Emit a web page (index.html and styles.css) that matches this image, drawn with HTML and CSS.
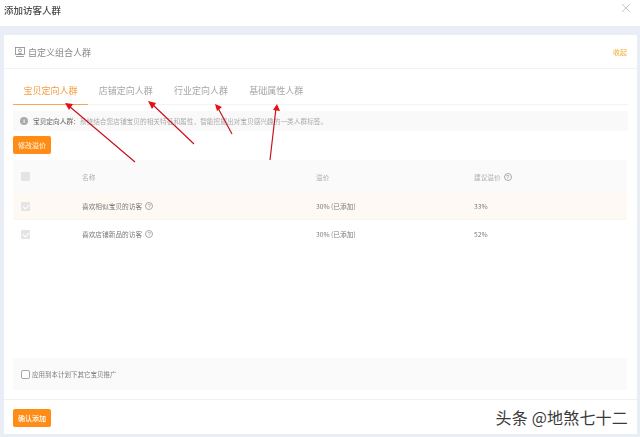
FILE: index.html
```html
<!DOCTYPE html>
<html lang="zh">
<head>
<meta charset="utf-8">
<title>添加访客人群</title>
<link rel="stylesheet" href="styles.css">
</head>
<body>
<div class="dialog">
  <header class="dialog-head">
    <h1>添加访客人群</h1>
    <svg class="close" width="10" height="10" viewBox="0 0 10 10"><path d="M1 1l8 8M9 1l-8 8"/></svg>
  </header>
  <main class="dialog-body">
    <section class="card">
      <div class="card-head">
        <div class="card-title">
          <svg class="title-icon" width="10" height="10" viewBox="0 0 10 10"><rect x=".5" y=".5" width="9" height="7"/><circle cx="5" cy="3.4" r="1.5"/><path d="M2.5 7.5c.3-1.5 4.700-1.500 5 0M1 9.500h8"/></svg>
          <span>自定义组合人群</span>
        </div>
        <a class="collapse">收起</a>
      </div>
      <div class="tabs">
        <span class="tab active">宝贝定向人群</span>
        <span class="tab">店铺定向人群</span>
        <span class="tab">行业定向人群</span>
        <span class="tab">基础属性人群</span>
      </div>
      <div class="notice">
        <span class="info">i</span>
        <b>宝贝定向人群：</b><span>系统结合您店铺宝贝的相关特征和属性，智能挖掘出对宝贝感兴趣的一类人群标签。</span>
      </div>
      <div class="actions"><button class="btn">修改溢价</button></div>
      <div class="table">
        <div class="row thead">
          <span class="c1"><i class="check"></i></span>
          <span class="c2">名称</span>
          <span class="c3">溢价</span>
          <span class="c4">建议溢价<i class="help">?</i></span>
        </div>
        <div class="row tint">
          <span class="c1"><i class="check on"></i></span>
          <span class="c2 dark">喜欢相似宝贝的访客<i class="help">?</i></span>
          <span class="c3 dark">30% (已添加)</span>
          <span class="c4 dark">33%</span>
        </div>
        <div class="row">
          <span class="c1"><i class="check on"></i></span>
          <span class="c2 dark">喜欢店铺新品的访客<i class="help">?</i></span>
          <span class="c3 dark">30% (已添加)</span>
          <span class="c4 dark">52%</span>
        </div>
      </div>
      <label class="apply"><i class="box"></i>应用到本计划下其它宝贝推广</label>
      <div class="card-foot"><button class="btn strong">确认添加</button></div>
    </section>
  </main>
</div>
<svg class="arrows" width="640" height="437" viewBox="0 0 640 437">
  <path class="shaft" d="M135 162L69 106M194 144L152 104M232 134L218 108M270 160L276 108"/>
  <path class="head" d="M65 103l8 1-4 6zM148 101l8 2-4 6zM215 104l7 3-5 4zM277 104l3 7-7-1z"/>
</svg>
<div class="watermark">头条 @地煞七十二</div>
</body>
</html>
```
FILE: styles.css
```css
* { box-sizing: border-box; }
html, body { margin: 0; padding: 0; }
body {
  position: relative;
  width: 640px;
  height: 437px;
  overflow: hidden;
  background: #fff;
  font-family: "Noto Sans CJK SC", "Liberation Sans", sans-serif;
  color: #666;
}
.dialog { display: flex; flex-direction: column; height: 437px; filter: blur(.3px); }
.dialog-head {
  display: flex;
  align-items: center;
  justify-content: space-between;
  height: 26px;
  padding: 0 9px 7px 4px;
  flex: none;
}
.dialog-head h1 { margin: 0; font-size: 9.500px; font-weight: 500; color: #4a4a4a; }
.close { stroke: #c4c4c4; stroke-width: 1; fill: none; margin-bottom: 3px; }
.dialog-body {
  flex: 1;
  padding: 9px 3px 3px 4px;
  background: #e9edf6;
  display: flex;
  min-height: 0;
}
.card {
  flex: 1;
  display: flex;
  flex-direction: column;
  background: #fff;
  min-width: 0;
}
.card-head {
  display: flex;
  align-items: center;
  justify-content: space-between;
  height: 34px;
  padding: 1px 10px 0 11px;
  border-bottom: 1px solid #f1f2f5;
  flex: none;
}
.card-title { display: flex; align-items: center; gap: 3px; font-size: 9px; color: #888; }
.title-icon { stroke: #888; stroke-width: .8; fill: none; }
.collapse { font-size: 7px; color: #f5a623; }
.tabs {
  display: flex;
  height: 36px;
  margin: 0 9px;
  border-bottom: 1px solid #f3f3f3;
  flex: none;
}
.tab {
  width: 75.200px;
  display: flex;
  align-items: center;
  justify-content: center;
  font-size: 9px;
  color: #a6a6a6;
  padding-top: 7px;
}
.tab.active { color: #f79a3e; border-bottom: 1px solid #f9a65a; margin-bottom: -1px; }
.notice {
  display: flex;
  align-items: center;
  height: 20px;
  margin: 6px 9px 0;
  padding-left: 7px;
  background: #f9f9f9;
  font-size: 6.700px;
  color: #acacac;
  white-space: nowrap;
  flex: none;
}
.notice b { font-weight: 500; color: #777; }
.info {
  width: 8px;
  height: 8px;
  border-radius: 50%;
  margin-right: 5px;
  background: #aaa;
  color: #fff;
  font: bold 6px/8px "Liberation Sans", sans-serif;
  text-align: center;
}
.actions { margin: 5px 0 0 9px; flex: none; display: flex; }
.btn {
  width: 38px;
  height: 18px;
  padding: 0;
  border: 0;
  border-radius: 2px;
  background: #ff8c14;
  color: #ffe9d2;
  font: 500 7px "Noto Sans CJK SC", sans-serif;
}
.table { margin: 6px 10px 0 9px; flex: none; }
.row {
  display: grid;
  grid-template-columns: 69px 234px 158px 1fr;
  align-items: center;
  height: 28px;
  font-size: 6.700px;
  color: #b0b0b0;
}
.row.thead { height: 33px; background: #fafafa; }
.row.tint { background: #fef9f3; height: 27px; border-bottom: 1px solid #f7f5f1; }
.row .dark { color: #7a7a7a; }
.c1 { padding-left: 8px; display: flex; }
.c2, .c3, .c4 { display: flex; align-items: center; }
.check {
  width: 9px;
  height: 9px;
  border-radius: 1px;
  background: #e4e4e4;
  position: relative;
}
.check.on::after {
  content: "";
  position: absolute;
  left: 3px;
  top: 1px;
  width: 3px;
  height: 5px;
  border: solid #fff;
  border-width: 0 1px 1px 0;
  transform: rotate(45deg);
}
.help {
  width: 8px;
  height: 8px;
  margin-left: 3px;
  border: 1px solid #aaa;
  border-radius: 50%;
  color: #999;
  font: normal 6px/6px "Liberation Sans", sans-serif;
  text-align: center;
}
.apply {
  display: flex;
  align-items: center;
  gap: 2px;
  height: 32px;
  margin: 110px 10px 0 9px;
  padding-left: 8px;
  background: #fafafa;
  font-size: 6.500px;
  color: #808080;
  flex: none;
}
.box {
  width: 9px;
  height: 9px;
  border: 1px solid #aaa;
  border-radius: 2px;
  background: #fff;
}
.card-foot {
  margin-top: 9px;
  padding: 9px 0 0 9px;
  border-top: 1px solid #eef0f4;
  flex: none;
  display: flex;
}
.btn.strong { color: #fff; }
.arrows { position: absolute; left: 0; top: 0; pointer-events: none; }
.shaft { stroke: #c8141e; stroke-width: 1.200; fill: none; }
.head { fill: #e60f14; }
.watermark {
  position: absolute;
  right: 12px;
  top: 407px;
  font-size: 16px;
  line-height: 20px;
  letter-spacing: .2px;
  color: #3a3a3a;
  text-shadow: 0 0 1px #fff, 0 0 2px #fff;
  white-space: nowrap;
}
```
